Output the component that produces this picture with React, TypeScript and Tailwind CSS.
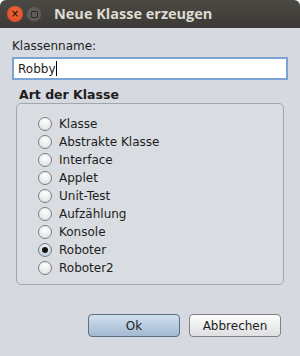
const kinds = [
  "Klasse",
  "Abstrakte Klasse",
  "Interface",
  "Applet",
  "Unit-Test",
  "Aufzählung",
  "Konsole",
  "Roboter",
  "Roboter2",
];

function Radio({ checked }: { checked: boolean }) {
  return (
    <span
      className={
        "flex h-[14px] w-[14px] shrink-0 items-center justify-center rounded-full border border-[#7b7d80] " +
        (checked
          ? "bg-[radial-gradient(circle_at_50%_35%,#f4f7fa,#b4c6d8)]"
          : "bg-[radial-gradient(circle_at_50%_30%,#ffffff,#d9dbde)]")
      }
    >
      {checked && <span className="h-[6px] w-[6px] rounded-full bg-[#111]" />}
    </span>
  );
}

export default function App() {
  return (
    <div className="h-[356px] w-[300px] bg-white font-['DejaVu_Sans',sans-serif] text-[12px] text-[#1d1d1d]">
      <div className="flex h-full flex-col overflow-hidden rounded-t-[6px] bg-[#d6d9df]">
        {/* Title bar */}
        <div className="flex h-[28px] items-center bg-gradient-to-b from-[#4a4944] to-[#3b3a36] pl-[7px]">
          <span className="flex h-[16px] w-[16px] items-center justify-center rounded-full bg-[radial-gradient(circle_at_50%_40%,#f4683c,#d9461d)] text-[10px] leading-none font-bold text-[#3a1a10]">
            ×
          </span>
          <span className="ml-[3px] flex h-[16px] w-[16px] items-center justify-center rounded-full bg-[#5e5d59] border border-[#4a4945]">
            <span className="h-[7px] w-[7px] rounded-[1px] border border-[#2e2d2a]" />
          </span>
          <span className="ml-[12px] font-['Open_Sans',sans-serif] text-[14.5px] font-bold text-[#dfdbd2]">
            Neue Klasse erzeugen
          </span>
        </div>

        <div className="flex flex-1 flex-col px-[12px] pt-[11px]">
          <div className="leading-[14px]">Klassenname:</div>
          <div className="mt-[4px] flex h-[23px] items-center border-2 border-[#7ba3d3] bg-white pl-[4px]">
            Robby<span className="ml-[1px] h-[15px] w-px bg-black" />
          </div>

          <div className="mt-[8px] pl-[7px] text-[12.5px] font-bold leading-[14px]">Art der Klasse</div>
          <div className="mx-[4px] mt-[1px] flex h-[182px] flex-col gap-[4px] rounded-[5px] border border-[#a3a6ab] bg-[#d9dce1] pl-[21px] pt-[13px]">
            {kinds.map((k) => (
              <label key={k} className="flex h-[14px] items-center gap-[7px]">
                <Radio checked={k === "Roboter"} />
                <span className="leading-[14px]">{k}</span>
              </label>
            ))}
          </div>

          <div className="mt-[29px] flex justify-end gap-[9px] pr-[7px]">
            <button className="h-[23px] w-[92px] rounded-[4px] border border-[#5d6e80] bg-gradient-to-b from-[#d1e0ee] to-[#a2b9d1] text-[12px]">
              Ok
            </button>
            <button className="h-[23px] w-[92px] rounded-[4px] border border-[#7f8185] bg-gradient-to-b from-[#fdfdfd] to-[#dedfe1] text-[12px]">
              Abbrechen
            </button>
          </div>
        </div>
      </div>
    </div>
  );
}
